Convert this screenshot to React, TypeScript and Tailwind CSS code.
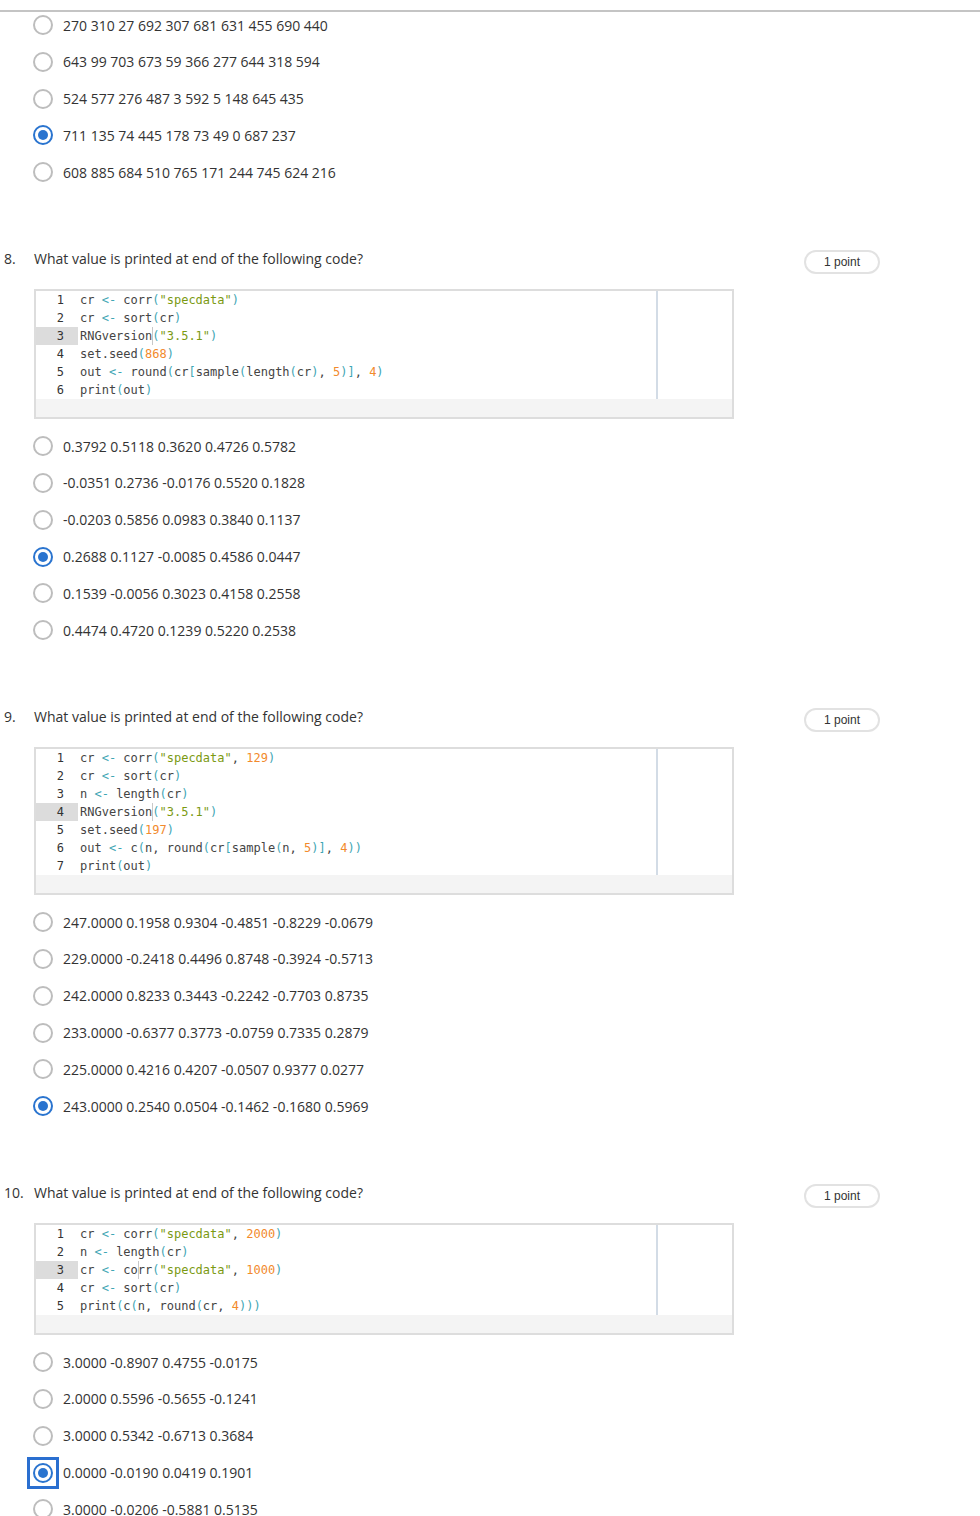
import React from "react";

type Tok = [string, "t" | "o" | "s" | "n"];

const tokColor: Record<string, string> = {
  t: "text-[#444444]",
  o: "text-[#3fa6b4]",
  s: "text-[#7b9a12]",
  n: "text-[#f28a2c]",
};

// simple tokenizer for R-like code
function tokenize(line: string): Tok[] {
  const out: Tok[] = [];
  let i = 0;
  while (i < line.length) {
    const c = line[i];
    if (c === '"') {
      let j = line.indexOf('"', i + 1);
      out.push([line.slice(i, j + 1), "s"]);
      i = j + 1;
    } else if (line.startsWith("<-", i)) {
      out.push(["<-", "o"]);
      i += 2;
    } else if ("()[]".includes(c)) {
      out.push([c, "o"]);
      i++;
    } else if (/[0-9]/.test(c) && (i === 0 || !/[A-Za-z.]/.test(line[i - 1]))) {
      let j = i;
      while (j < line.length && /[0-9]/.test(line[j])) j++;
      out.push([line.slice(i, j), "n"]);
      i = j;
    } else {
      let j = i;
      while (
        j < line.length &&
        line[j] !== '"' &&
        !line.startsWith("<-", j) &&
        !"()[]".includes(line[j]) &&
        !(/[0-9]/.test(line[j]) && (j === 0 || !/[A-Za-z.]/.test(line[j - 1])))
      )
        j++;
      out.push([line.slice(i, j), "t"]);
      i = j;
    }
  }
  return out;
}

function CodeBox({ lines, active, cursorCol }: { lines: string[]; active: number; cursorCol: number }) {
  return (
    <div className="w-[700px] border-2 border-[#dddddd] bg-[#f4f4f4]">
      <div className="relative bg-white">
        {lines.map((l, idx) => {
          const isActive = idx + 1 === active;
          return (
            <div key={idx} className="flex h-[18px] items-center">
              <div
                className={`w-[42px] shrink-0 h-full pr-[14px] text-right leading-[18px] text-[#333] ${
                  isActive ? "bg-[#dcdcdc]" : "bg-white"
                }`}
              >
                {idx + 1}
              </div>
              <div className="pl-[2px] leading-[18px] whitespace-pre relative">
                {tokenize(l).map((t, k) => (
                  <span key={k} className={tokColor[t[1]]}>
                    {t[0]}
                  </span>
                ))}
                {isActive && (
                  <span
                    className="absolute top-0 h-[18px] w-px bg-[#c8c8c8]"
                    style={{ left: 2 + cursorCol * 7.22 }}
                  />
                )}
              </div>
            </div>
          );
        })}
        <div className="absolute top-0 bottom-0 left-[620px] w-[2px] bg-[#d3dce6]" />
      </div>
      <div className="h-[18px]" />
    </div>
  );
}

function Radio({ checked, focused }: { checked?: boolean; focused?: boolean }) {
  const circle = checked ? (
    <span className="flex h-[20px] w-[20px] items-center justify-center rounded-full border-2 border-[#2a74cf] bg-white">
      <span className="h-[10px] w-[10px] rounded-full bg-[#2a74cf]" />
    </span>
  ) : (
    <span className="block h-[20px] w-[20px] rounded-full border-2 border-[#bdbdbd] bg-white" />
  );
  if (focused) {
    return (
      <span className="relative block h-[20px] w-[20px] shrink-0">
        {circle}
        <span className="absolute -inset-[6px] border-[3px] border-[#2a6fd0]" />
      </span>
    );
  }
  return <span className="block shrink-0">{circle}</span>;
}

function Options({ items, selected, focused }: { items: string[]; selected: number; focused?: number }) {
  return (
    <div className="flex flex-col pl-[33px]">
      {items.map((t, i) => (
        <div key={i} className="flex h-[36.8px] items-center">
          <Radio checked={i === selected} focused={i === focused} />
          <span className="ml-[10px] text-[14px] text-[#333333]">{t}</span>
        </div>
      ))}
    </div>
  );
}

function Question({
  num,
  lines,
  active,
  cursorCol,
  options,
  selected,
  focused,
}: {
  num: string;
  lines: string[];
  active: number;
  cursorCol: number;
  options: string[];
  selected: number;
  focused?: number;
}) {
  return (
    <div className="mt-[58.6px]">
      <div className="flex h-[24px] items-start pr-[100px]">
        <div className="w-[34px] pl-[4px] text-[14px] leading-[20px] text-[#333]">{num}</div>
        <div className="flex-1 text-[14px] leading-[20px] text-[#333]">
          What value is printed at end of the following code?
        </div>
        <div className="mt-[1px] flex h-[24px] w-[76px] items-center justify-center rounded-full border-2 border-[#e2e2e2] font-['Liberation_Sans',Arial,sans-serif] text-[12px] text-[#333]">
          1 point
        </div>
      </div>
      <div className="mt-[16px] pl-[34px] font-['DejaVu_Sans_Mono',monospace] text-[12px]">
        <CodeBox lines={lines} active={active} cursorCol={cursorCol} />
      </div>
      <div className="mt-[8.6px]">
        <Options items={options} selected={selected} focused={focused} />
      </div>
    </div>
  );
}

export default function App() {
  return (
    <div className="w-[980px] bg-white font-['Open_Sans','Noto_Sans',sans-serif] pb-[20px]">
      <div className="h-[10px]" />
      <div className="h-[2px] bg-[#c4c4c4]" />
      <div className="-mt-[5.4px]">
        <Options
          items={[
            "270 310 27 692 307 681 631 455 690 440",
            "643 99 703 673 59 366 277 644 318 594",
            "524 577 276 487 3 592 5 148 645 435",
            "711 135 74 445 178 73 49 0 687 237",
            "608 885 684 510 765 171 244 745 624 216",
          ]}
          selected={3}
        />
      </div>
      <Question
        num="8."
        lines={[
          'cr <- corr("specdata")',
          "cr <- sort(cr)",
          'RNGversion("3.5.1")',
          "set.seed(868)",
          "out <- round(cr[sample(length(cr), 5)], 4)",
          "print(out)",
        ]}
        active={3}
        cursorCol={10}
        options={[
          "0.3792 0.5118 0.3620 0.4726 0.5782",
          "-0.0351 0.2736 -0.0176 0.5520 0.1828",
          "-0.0203 0.5856 0.0983 0.3840 0.1137",
          "0.2688 0.1127 -0.0085 0.4586 0.0447",
          "0.1539 -0.0056 0.3023 0.4158 0.2558",
          "0.4474 0.4720 0.1239 0.5220 0.2538",
        ]}
        selected={3}
      />
      <Question
        num="9."
        lines={[
          'cr <- corr("specdata", 129)',
          "cr <- sort(cr)",
          "n <- length(cr)",
          'RNGversion("3.5.1")',
          "set.seed(197)",
          "out <- c(n, round(cr[sample(n, 5)], 4))",
          "print(out)",
        ]}
        active={4}
        cursorCol={10}
        options={[
          "247.0000 0.1958 0.9304 -0.4851 -0.8229 -0.0679",
          "229.0000 -0.2418 0.4496 0.8748 -0.3924 -0.5713",
          "242.0000 0.8233 0.3443 -0.2242 -0.7703 0.8735",
          "233.0000 -0.6377 0.3773 -0.0759 0.7335 0.2879",
          "225.0000 0.4216 0.4207 -0.0507 0.9377 0.0277",
          "243.0000 0.2540 0.0504 -0.1462 -0.1680 0.5969",
        ]}
        selected={5}
      />
      <Question
        num="10."
        lines={[
          'cr <- corr("specdata", 2000)',
          "n <- length(cr)",
          'cr <- corr("specdata", 1000)',
          "cr <- sort(cr)",
          "print(c(n, round(cr, 4)))",
        ]}
        active={3}
        cursorCol={8}
        options={[
          "3.0000 -0.8907 0.4755 -0.0175",
          "2.0000 0.5596 -0.5655 -0.1241",
          "3.0000 0.5342 -0.6713 0.3684",
          "0.0000 -0.0190 0.0419 0.1901",
          "3.0000 -0.0206 -0.5881 0.5135",
        ]}
        selected={3}
        focused={3}
      />
    </div>
  );
}
